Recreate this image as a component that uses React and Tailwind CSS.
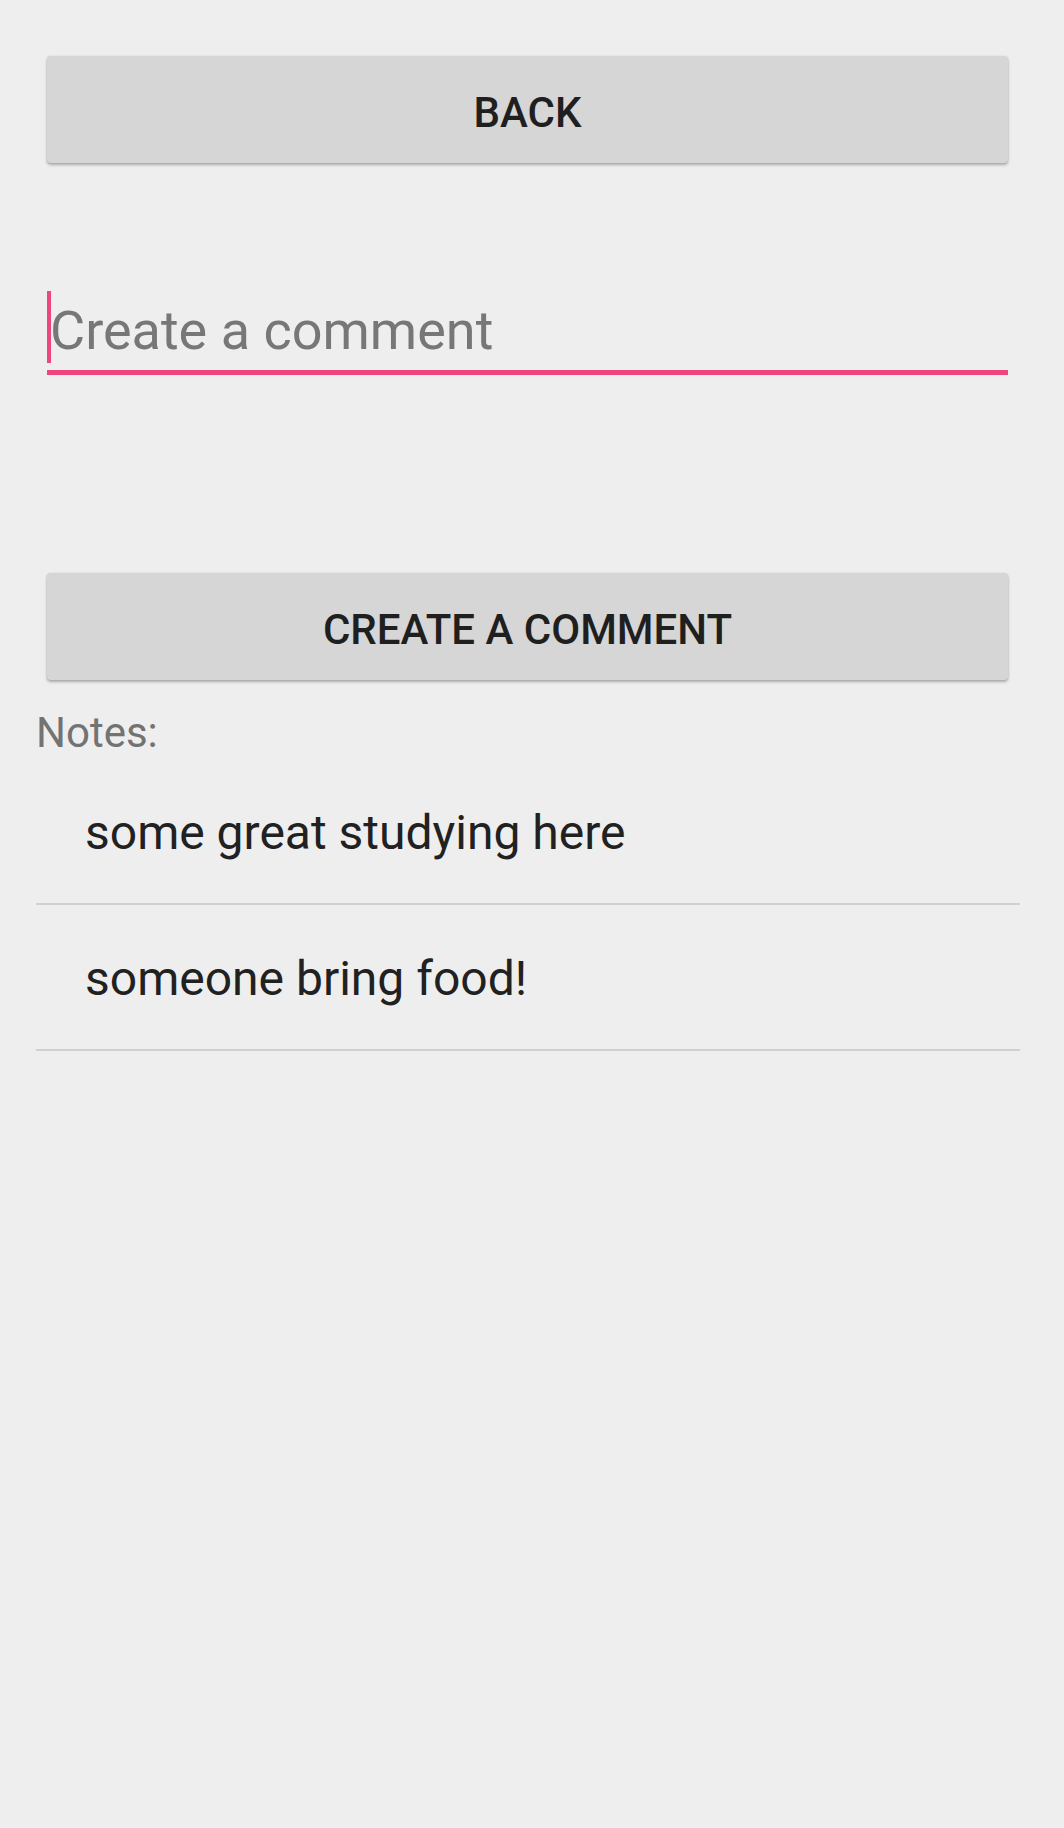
export default function App() {
  const font = { fontFamily: "Roboto, 'Noto Sans', sans-serif" };
  return (
    <div
      className="min-h-[1828px] w-[1064px] bg-[#eeeeee] pt-[56px] pl-[36px] pr-[44px]"
      style={font}
    >
      <button className="mx-[11px] flex h-[107px] w-[961px] items-center justify-center rounded-[4px] bg-[#d6d6d6] pt-[6px] text-[42px] font-medium leading-none text-[#1f1f1f] shadow-[0_2px_3px_rgba(0,0,0,0.28),0_0_2px_rgba(0,0,0,0.1)]">
        BACK
      </button>

      <div className="mx-[11px] mt-[128px] flex h-[84px] w-[961px] items-start border-b-[5px] border-[#ee4580]">
        <div className="h-[72px] w-[4px] bg-[#ee4580]" />
        <span className="-ml-[1px] pt-[4px] text-[54px] leading-[72px] text-[#777777]">
          Create a comment
        </span>
      </div>

      <button className="mx-[11px] mt-[198px] flex h-[107px] w-[961px] items-center justify-center rounded-[4px] bg-[#d6d6d6] pt-[6px] text-[42px] font-medium leading-none text-[#1f1f1f] shadow-[0_2px_3px_rgba(0,0,0,0.28),0_0_2px_rgba(0,0,0,0.1)]">
        CREATE A COMMENT
      </button>

      <div className="mt-[28px] text-[42px] leading-[50px] text-[#737373]">
        Notes:
      </div>

      <ul>
        {["some great studying here", "someone bring food!"].map((t, i) => (
          <li
            key={i}
            className={
              (i === 0 ? "h-[147px] pt-[51px] " : "h-[146px] pt-[50px] ") +
              "border-b-2 border-[#d0d0d0] pl-[49px] text-[48px] leading-[48px] text-[#212121]"
            }
          >
            {t}
          </li>
        ))}
      </ul>
    </div>
  );
}
